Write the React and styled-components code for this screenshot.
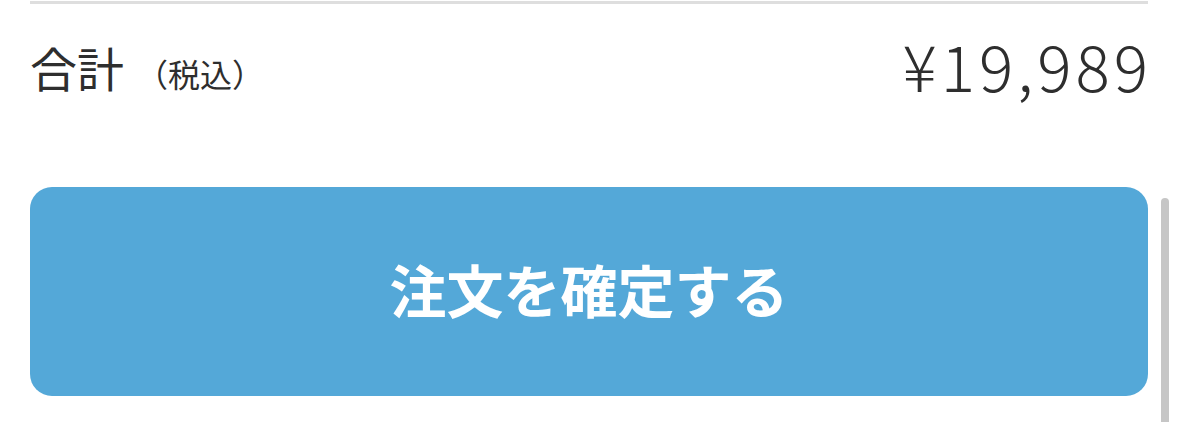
import React from 'react';
import styled, { createGlobalStyle } from 'styled-components';

const GlobalStyle = createGlobalStyle`
  html, body {
    margin: 0;
    padding: 0;
    background: #ffffff;
    font-family: "Noto Sans CJK JP", "Noto Sans", sans-serif;
  }
`;

const Page = styled.div`
  position: relative;
  width: 1179px;
  height: 422px;
  overflow: hidden;
  box-sizing: border-box;
  padding: 1px 31px 0 30px;
`;

const Divider = styled.div`
  height: 3px;
  background-color: #dedede;
`;

const TotalRow = styled.div`
  display: flex;
  justify-content: space-between;
  align-items: center;
  height: 124px;
  padding-bottom: 8px;
  color: #2e2e2e;
`;

const Label = styled.div`
  display: flex;
  align-items: baseline;
  font-size: 47px;
  font-weight: 400;
`;

const TaxNote = styled.span`
  font-size: 32px;
  margin-left: 12px;
`;

const Price = styled.div`
  font-size: 64px;
  font-weight: 300;
  letter-spacing: 4px;
  margin-right: -4px;
  margin-top: -4px;
`;

const ConfirmButton = styled.button`
  display: flex;
  align-items: center;
  justify-content: center;
  width: 100%;
  height: 209px;
  margin-top: 51px;
  padding: 0 0 8px;
  border: none;
  border-radius: 22px;
  background-color: #54a8d8;
  color: #ffffff;
  font-family: "Noto Sans CJK JP", sans-serif;
  font-size: 57px;
  font-weight: 700;
  cursor: pointer;
`;

const ScrollThumb = styled.div`
  position: absolute;
  left: 1161px;
  top: 198px;
  width: 8px;
  height: 240px;
  border-radius: 4px;
  background-color: #c6c6c6;
`;

const App = () => {
  return (
    <Page>
      <GlobalStyle />
      <Divider />
      <TotalRow>
        <Label>
          合計<TaxNote>（税込）</TaxNote>
        </Label>
        <Price>¥19,989</Price>
      </TotalRow>
      <ConfirmButton>注文を確定する</ConfirmButton>
      <ScrollThumb />
    </Page>
  );
};

export default App;
